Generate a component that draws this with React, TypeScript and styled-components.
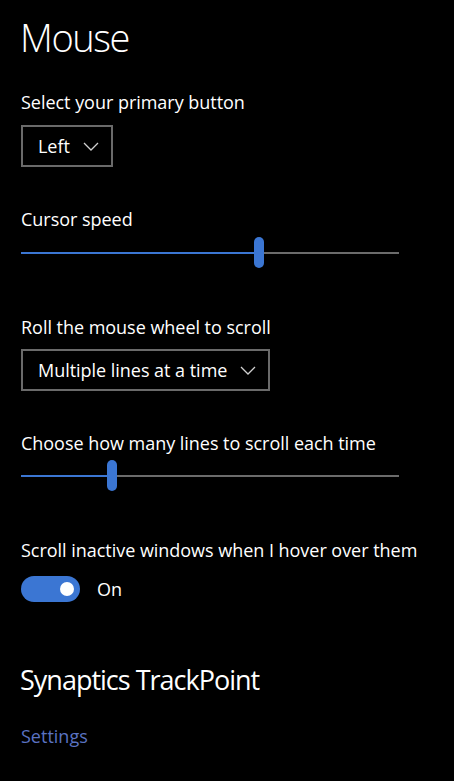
import React from "react";
import styled, { createGlobalStyle } from "styled-components";

const Global = createGlobalStyle`
  html, body { margin: 0; padding: 0; background: #000; }
  body { font-family: "Open Sans", "Noto Sans", sans-serif; color: #fff; }
`;

const Page = styled.div`
  display: flex;
  flex-direction: column;
  padding: 14px 0 0 21px;
  width: 454px;
  min-height: 781px;
  box-sizing: border-box;
  background: #000;
`;

const Title = styled.h1`
  margin: 0 0 0 -1px;
  font-size: 38px;
  line-height: 46px;
  font-weight: 300;
  letter-spacing: -1.4px;
`;

const Label = styled.div<{ $gap: number }>`
  margin-top: ${(p) => p.$gap}px;
  font-size: 18px;
  line-height: 24px;
  font-weight: 400;
  letter-spacing: -0.03px;
`;

const Select = styled.div<{ $gap: number }>`
  margin-top: ${(p) => p.$gap}px;
  align-self: flex-start;
  display: flex;
  align-items: center;
  gap: 13px;
  height: 42px;
  box-sizing: border-box;
  padding: 0 12px 0 15px;
  border: 2px solid #6a6a6a;
  font-size: 18px;
  letter-spacing: -0.03px;
`;

const Chevron = () => (
  <svg width="16" height="9" viewBox="0 0 16 9">
    <path d="M1 1 L8 8 L15 1" fill="none" stroke="#d0d0d0" strokeWidth="1.3" />
  </svg>
);

const SliderTrack = styled.div<{ $gap: number }>`
  margin-top: ${(p) => p.$gap}px;
  position: relative;
  width: 378px;
  height: 32px;
  display: flex;
  align-items: center;
`;

const Rail = styled.div`
  width: 100%;
  height: 2px;
  background: #6b6b6b;
`;

const Fill = styled.div`
  position: absolute;
  left: 0;
  top: 15px;
  height: 2px;
  background: #3b76d3;
`;

const Thumb = styled.div`
  position: absolute;
  top: 0;
  width: 10px;
  height: 31px;
  border-radius: 5px;
  background: #3b76d3;
`;

const Slider = ({ value, gap }: { value: number; gap: number }) => {
  const center = 5 + value * 368;
  return (
    <SliderTrack $gap={gap}>
      <Rail />
      <Fill style={{ width: center }} />
      <Thumb style={{ left: center - 5 }} />
    </SliderTrack>
  );
};

const ToggleRow = styled.div`
  margin-top: 14px;
  display: flex;
  align-items: center;
  gap: 17px;
  font-size: 18px;
  line-height: 26px;
`;

const Toggle = styled.div`
  width: 59px;
  height: 26px;
  border-radius: 13px;
  background: #3b76d3;
  display: flex;
  align-items: center;
  justify-content: flex-end;
  padding-right: 6px;
  box-sizing: border-box;
`;

const Knob = styled.div`
  width: 14px;
  height: 14px;
  border-radius: 50%;
  background: #fff;
`;

const Subtitle = styled.h2`
  margin: 60px 0 0 -1px;
  font-size: 27px;
  line-height: 36px;
  font-weight: 400;
  letter-spacing: -1px;
`;

const Link = styled.a`
  margin-top: 26px;
  font-size: 18px;
  line-height: 24px;
  color: #5a72c2;
  text-decoration: none;
`;

export default function App() {
  return (
    <>
      <Global />
      <Page>
        <Title>Mouse</Title>
        <Label $gap={30}>Select your primary button</Label>
        <Select $gap={11}>
          <span>Left</span>
          <Chevron />
        </Select>
        <Label $gap={40}>Cursor speed</Label>
        <Slider value={0.633} gap={6} />
        <Label $gap={46}>Roll the mouse wheel to scroll</Label>
        <Select $gap={10}>
          <span>Multiple lines at a time</span>
          <Chevron />
        </Select>
        <Label $gap={40}>Choose how many lines to scroll each time</Label>
        <Slider value={0.234} gap={5} />
        <Label $gap={46}>Scroll inactive windows when I hover over them</Label>
        <ToggleRow>
          <Toggle>
            <Knob />
          </Toggle>
          <span>On</span>
        </ToggleRow>
        <Subtitle>Synaptics TrackPoint</Subtitle>
        <Link>Settings</Link>
      </Page>
    </>
  );
}
